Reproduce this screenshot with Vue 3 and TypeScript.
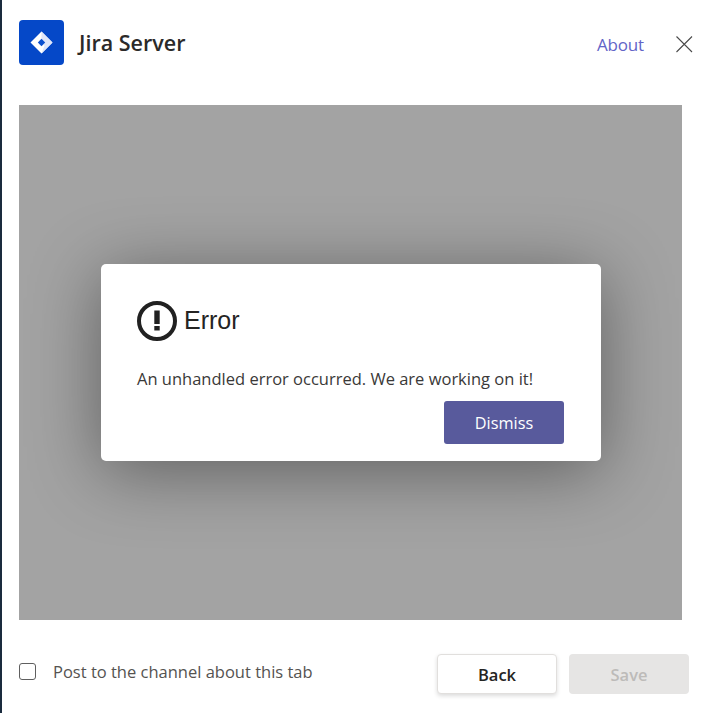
<script setup lang="ts">
const title: string = 'Jira Server'
</script>

<template>
  <div class="page">
    <header class="header">
      <div class="logo">
        <svg width="45" height="45" viewBox="0 0 45 45">
          <rect width="45" height="45" rx="4" fill="#0548c8" />
          <path d="M22.5 11.5 L33.5 22.5 L22.5 33.5 L11.5 22.5 Z" fill="#fff" />
          <path d="M22.5 11.5 L33.5 22.5 L22.5 33.5 L25.5 25.5 L22.5 22.5 Z" fill="#dfe6fa" />
          <path d="M22.5 18.8 L26.2 22.5 L22.5 26.2 L18.8 22.5 Z" fill="#0b50cf" />
        </svg>
      </div>
      <span class="title">{{ title }}</span>
      <a class="about">About</a>
      <svg class="close" width="17" height="17" viewBox="0 0 17 17">
        <path d="M0.5 0.5 L16 16 M16 0.5 L0.5 16" stroke="#4a4a4a" stroke-width="1.1" fill="none" />
      </svg>
    </header>

    <main class="panel">
      <section class="modal">
        <div class="modal-head">
          <svg class="err" width="40" height="40" viewBox="0 0 40 40">
            <circle cx="20" cy="20" r="18" fill="none" stroke="#212121" stroke-width="4" />
            <rect x="17.3" y="9.5" width="5.4" height="13.5" fill="#212121" />
            <rect x="17.3" y="25" width="5.4" height="4.5" fill="#212121" />
          </svg>
          <h2 class="err-title">Error</h2>
        </div>
        <p class="msg">An unhandled error occurred. We are working on it!</p>
        <div class="actions">
          <button class="dismiss">Dismiss</button>
        </div>
      </section>
    </main>

    <footer class="footer">
      <label class="check">
        <span class="box"></span>
        <span class="check-label">Post to the channel about this tab</span>
      </label>
      <div class="buttons">
        <button class="btn back">Back</button>
        <button class="btn save">Save</button>
      </div>
    </footer>
  </div>
</template>

<style>
html, body { margin: 0; background: #fff; }
</style>

<style scoped>
.page {
  box-sizing: border-box;
  width: 709px;
  height: 713px;
  overflow: hidden;
  border-left: 2px solid #1a2b3e;
  padding: 20px 20px 0 17px;
  background: #fff;
  font-family: "Open Sans", "Noto Sans", sans-serif;
  color: #252423;
  display: flex;
  flex-direction: column;
}
.header {
  display: flex;
  align-items: center;
  height: 45px;
  padding-right: 3px;
  margin-right: -7px;
}
.logo { width: 45px; height: 45px; }
.logo svg { display: block; }
.title {
  margin-left: 15px;
  font-size: 21.5px;
  font-weight: 600;
  margin-top: -1px;
  color: #2b2a29;
}
.about {
  margin-left: auto;
  margin-top: 4px;
  font-size: 17px;
  color: #6264c7;
  letter-spacing: -0.15px;
}
.close { margin-left: 32px; margin-top: 3px; flex: none; }
.panel {
  margin-top: 40px;
  width: 663px;
  height: 515px;
  background: #a3a3a3;
  display: flex;
  align-items: center;
  justify-content: center;
  flex: none;
}
.modal {
  box-sizing: border-box;
  width: 500px;
  height: 197px;
  margin-left: 1px;
  background: #fff;
  border-radius: 5px;
  padding: 37px 37px 17px 36px;
  box-shadow: 0 10px 70px rgba(0, 0, 0, 0.42);
  display: flex;
  flex-direction: column;
}
.modal-head { display: flex; align-items: center; gap: 7px; }
.err { display: block; flex: none; }
.err-title {
  margin: -2px 0 0;
  font-family: "Liberation Sans", Arial, sans-serif;
  font-size: 25px;
  font-weight: 400;
  color: #252423;
}
.msg {
  margin: 27px 0 0;
  font-size: 16.5px;
  line-height: 22px;
  color: #3a3938;
  white-space: nowrap;
}
.actions { display: flex; justify-content: flex-end; margin-top: 11px; }
.dismiss {
  width: 120px;
  height: 43px;
  border: 0;
  border-radius: 3px;
  background: #585a9c;
  color: #fff;
  font: 400 16.3px "Open Sans", sans-serif;
}
.footer {
  display: flex;
  align-items: center;
  justify-content: space-between;
  margin-top: 34px;
}
.check { display: flex; align-items: center; }
.box {
  box-sizing: border-box;
  width: 17px;
  height: 17px;
  border: 1.5px solid #5f5f5f;
  border-radius: 3px;
  margin-top: -6px;
}
.check-label {
  margin-left: 17px;
  font-size: 16.5px;
  color: #555351;
  margin-top: -6px;
}
.buttons { display: flex; gap: 12px; }
.btn {
  box-sizing: border-box;
  width: 120px;
  height: 40px;
  border-radius: 4px;
  font: 600 16.5px "Open Sans", sans-serif;
}
.back {
  background: #fff;
  border: 1px solid #e1dfdd;
  color: #252423;
  box-shadow: 0 2px 4px rgba(0, 0, 0, 0.14);
}
.save {
  background: #e6e5e4;
  border: 0;
  color: #bdbbb9;
}
</style>
